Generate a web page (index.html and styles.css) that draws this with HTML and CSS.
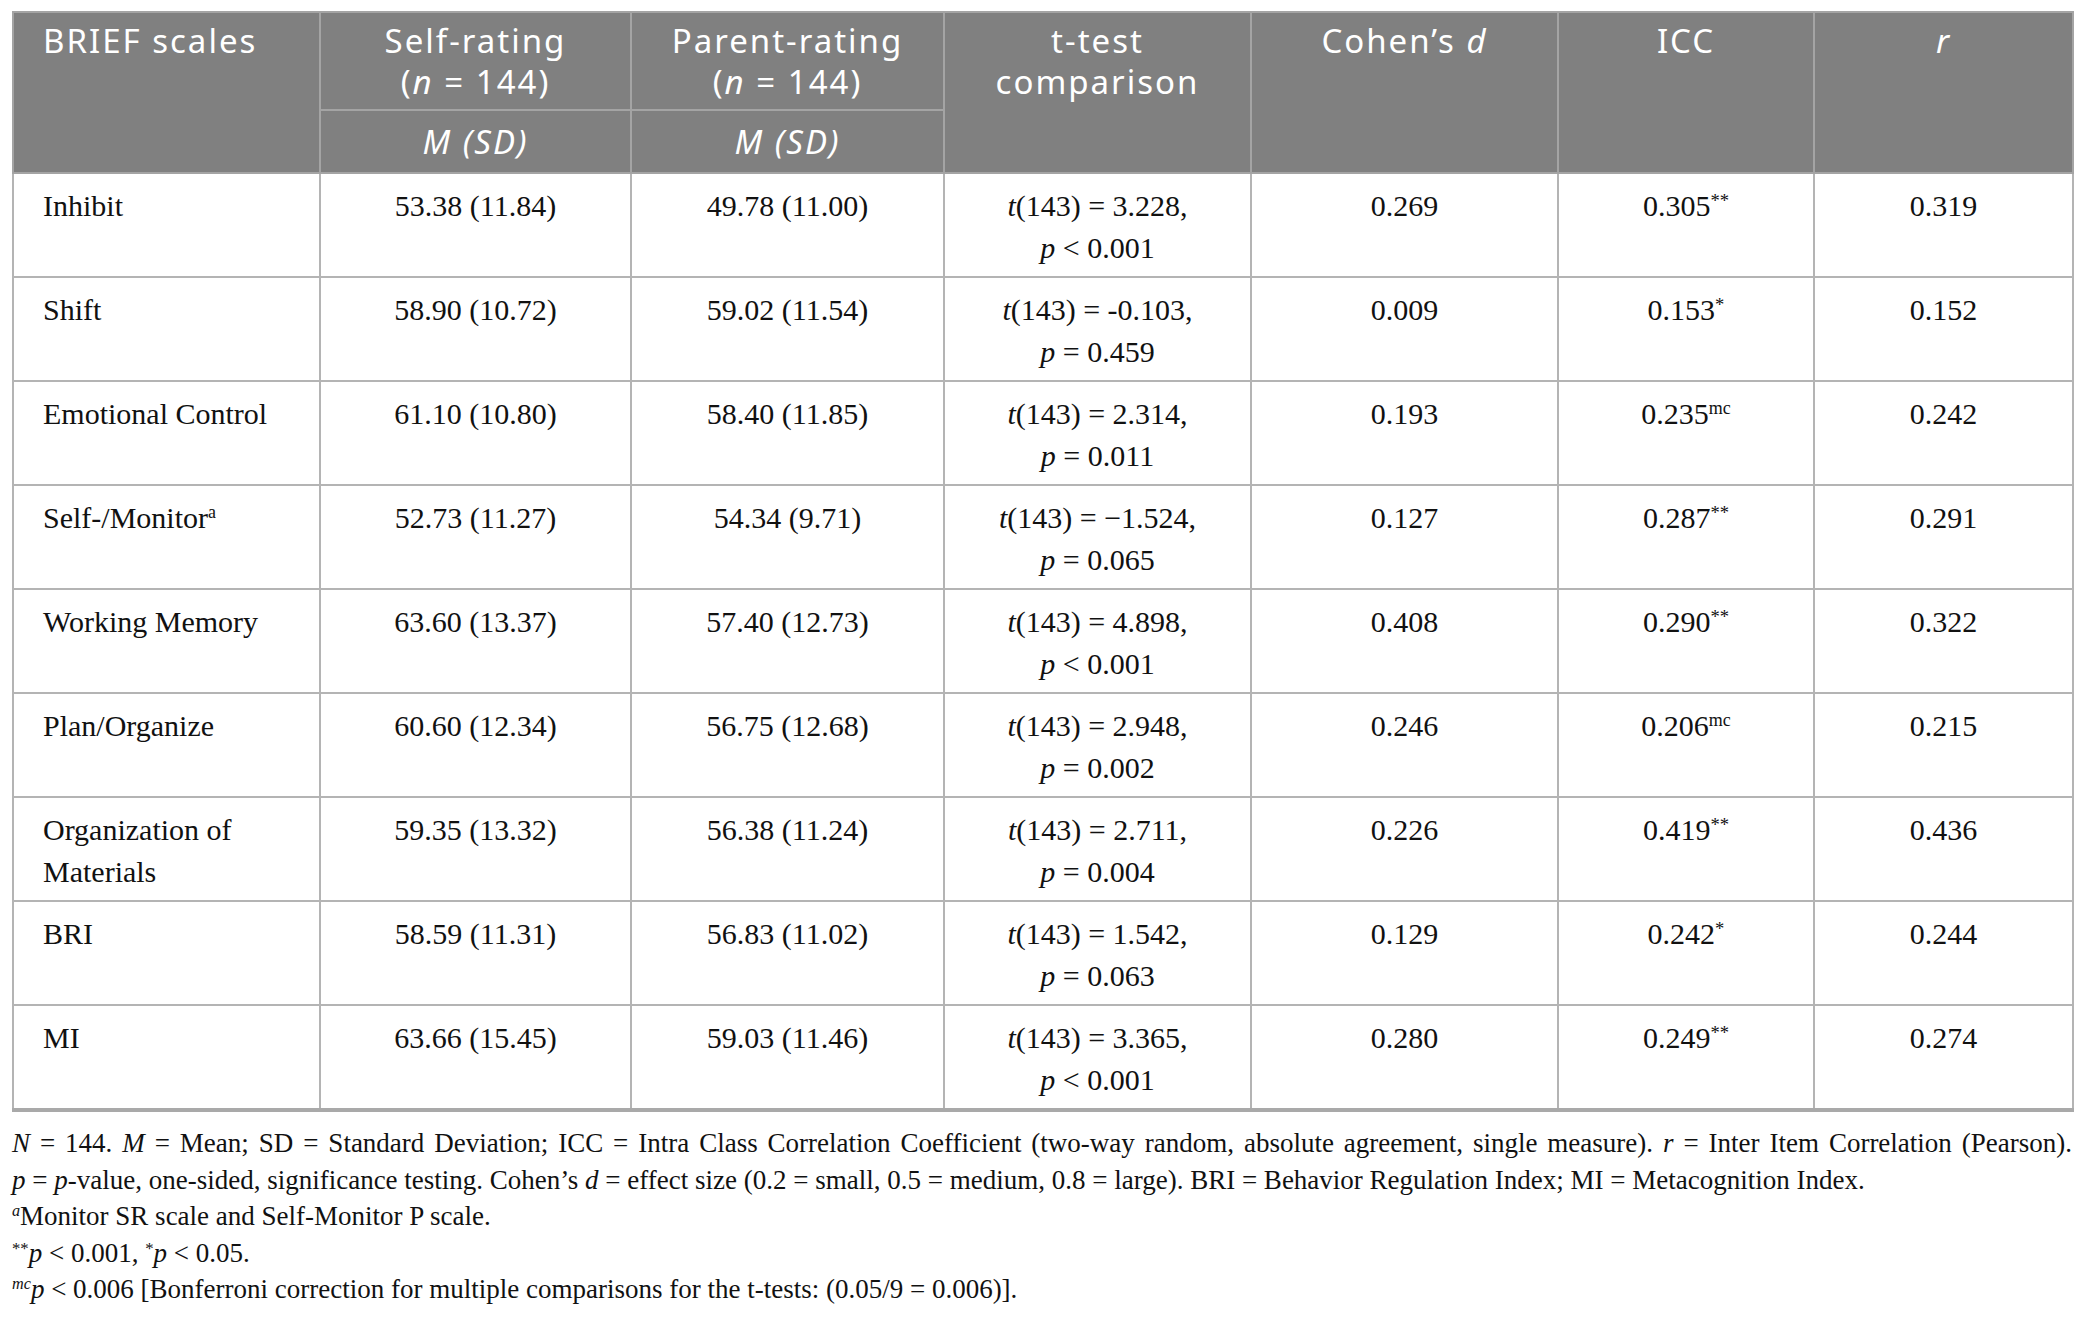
FILE: index.html
```html
<!DOCTYPE html>
<html lang="en">
<head>
<meta charset="utf-8">
<title>BRIEF scales</title>
<link rel="stylesheet" href="styles.css">
</head>
<body>
<div class="page">
  <table class="data">
    <colgroup>
      <col class="c1"><col class="c2"><col class="c3"><col class="c4"><col class="c5"><col class="c6"><col class="c7">
    </colgroup>
    <thead>
      <tr>
        <th rowspan="2" class="left">BRIEF scales</th>
        <th>Self-rating<br>(<i>n</i> = 144)</th>
        <th>Parent-rating<br>(<i>n</i> = 144)</th>
        <th rowspan="2">t-test<br>comparison</th>
        <th rowspan="2">Cohen’s <i>d</i></th>
        <th rowspan="2">ICC</th>
        <th rowspan="2"><i>r</i></th>
      </tr>
      <tr class="sub">
        <th><i>M (SD)</i></th>
        <th><i>M (SD)</i></th>
      </tr>
    </thead>
    <tbody>
      <tr><td class="left">Inhibit</td><td>53.38 (11.84)</td><td>49.78 (11.00)</td><td><i>t</i>(143) = 3.228,<br><i>p</i> &lt; 0.001</td><td>0.269</td><td>0.305<sup class="ast">**</sup></td><td>0.319</td></tr>
      <tr><td class="left">Shift</td><td>58.90 (10.72)</td><td>59.02 (11.54)</td><td><i>t</i>(143) = -0.103,<br><i>p</i> = 0.459</td><td>0.009</td><td>0.153<sup class="ast">*</sup></td><td>0.152</td></tr>
      <tr><td class="left">Emotional Control</td><td>61.10 (10.80)</td><td>58.40 (11.85)</td><td><i>t</i>(143) = 2.314,<br><i>p</i> = 0.011</td><td>0.193</td><td>0.235<sup>mc</sup></td><td>0.242</td></tr>
      <tr><td class="left">Self-/Monitor<sup>a</sup></td><td>52.73 (11.27)</td><td>54.34 (9.71)</td><td><i>t</i>(143) = −1.524,<br><i>p</i> = 0.065</td><td>0.127</td><td>0.287<sup class="ast">**</sup></td><td>0.291</td></tr>
      <tr><td class="left">Working Memory</td><td>63.60 (13.37)</td><td>57.40 (12.73)</td><td><i>t</i>(143) = 4.898,<br><i>p</i> &lt; 0.001</td><td>0.408</td><td>0.290<sup class="ast">**</sup></td><td>0.322</td></tr>
      <tr><td class="left">Plan/Organize</td><td>60.60 (12.34)</td><td>56.75 (12.68)</td><td><i>t</i>(143) = 2.948,<br><i>p</i> = 0.002</td><td>0.246</td><td>0.206<sup>mc</sup></td><td>0.215</td></tr>
      <tr><td class="left">Organization of<br>Materials</td><td>59.35 (13.32)</td><td>56.38 (11.24)</td><td><i>t</i>(143) = 2.711,<br><i>p</i> = 0.004</td><td>0.226</td><td>0.419<sup class="ast">**</sup></td><td>0.436</td></tr>
      <tr><td class="left">BRI</td><td>58.59 (11.31)</td><td>56.83 (11.02)</td><td><i>t</i>(143) = 1.542,<br><i>p</i> = 0.063</td><td>0.129</td><td>0.242<sup class="ast">*</sup></td><td>0.244</td></tr>
      <tr><td class="left">MI</td><td>63.66 (15.45)</td><td>59.03 (11.46)</td><td><i>t</i>(143) = 3.365,<br><i>p</i> &lt; 0.001</td><td>0.280</td><td>0.249<sup class="ast">**</sup></td><td>0.274</td></tr>
    </tbody>
  </table>
  <div class="notes">
    <p class="just"><i>N</i> = 144. <i>M</i> = Mean; SD = Standard Deviation; ICC = Intra Class Correlation Coefficient (two-way random, absolute agreement, single measure). <i>r</i> = Inter Item Correlation (Pearson).</p>
    <p><i>p</i> = <i>p</i>-value, one-sided, significance testing. Cohen’s <i>d</i> = effect size (0.2 = small, 0.5 = medium, 0.8 = large). BRI = Behavior Regulation Index; MI = Metacognition Index.</p>
    <p><sup><i>a</i></sup>Monitor SR scale and Self-Monitor P scale.</p>
    <p><sup class="ast">**</sup><i>p</i> &lt; 0.001, <sup class="ast">*</sup><i>p</i> &lt; 0.05.</p>
    <p><sup><i>mc</i></sup><i>p</i> &lt; 0.006 [Bonferroni correction for multiple comparisons for the t-tests: (0.05/9 = 0.006)].</p>
  </div>
</div>
</body>
</html>
```

FILE: styles.css
```css
html, body {
  margin: 0;
  padding: 0;
  background: #ffffff;
}

.page {
  padding: 11px 12px 0 12px;
}

.data {
  width: 2060px;
  border-collapse: collapse;
  table-layout: fixed;
  border: 2px solid #b4b4b4;
  border-bottom: 4px solid #a9a9a9;
}

.c1 { width: 307px; }
.c2 { width: 311px; }
.c3 { width: 313px; }
.c4 { width: 307px; }
.c5 { width: 307px; }
.c6 { width: 256px; }
.c7 { width: 259px; }

.data th {
  background: #808080;
  color: #ffffff;
  font-family: "Noto Sans", "Open Sans", sans-serif;
  font-weight: 400;
  font-size: 33px;
  line-height: 41px;
  letter-spacing: 2px;
  text-align: center;
  vertical-align: top;
  padding: 7px 6px 7px 6px;
  border: 2px solid #a4a4a4;
}

.data tr.sub th {
  padding: 10px 6px 10px 6px;
}

.data th.left {
  text-align: left;
  padding-left: 29px;
}

.data td {
  font-family: "Liberation Serif", "Times New Roman", serif;
  font-size: 30px;
  line-height: 42px;
  color: #111111;
  text-align: center;
  vertical-align: top;
  padding: 11px 10px 7px 10px;
  border: 2px solid #b4b4b4;
}

.data td.left {
  text-align: left;
  padding-left: 29px;
}

sup {
  font-size: 0.6em;
  line-height: 0;
  vertical-align: 0.55em;
}

sup.ast {
  font-size: 0.62em;
  vertical-align: 0.5em;
}

.notes {
  font-family: "Liberation Serif", "Times New Roman", serif;
  font-size: 27px;
  line-height: 36.6px;
  color: #111111;
  padding-top: 13px;
  width: 2060px;
}

.notes p {
  margin: 0;
}

.notes p.just {
  text-align: justify;
  text-align-last: justify;
}
```
